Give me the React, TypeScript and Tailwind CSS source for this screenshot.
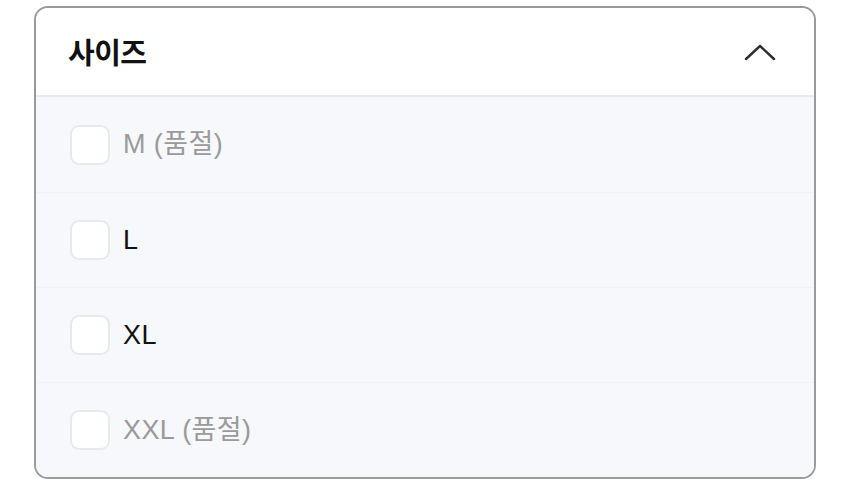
import React from "react";

const items = [
  { label: "M (품절)", disabled: true },
  { label: "L", disabled: false },
  { label: "XL", disabled: false },
  { label: "XXL (품절)", disabled: true },
];

export default function App() {
  return (
    <div className="w-[850px] h-[491px] bg-white pt-[6px] pl-[34px]" style={{ fontFamily: '"Liberation Sans", "Noto Sans CJK KR", sans-serif' }}>
      <div className="w-[782px] rounded-[14px] border-2 border-[#9a9a9a] overflow-hidden">
        <div className="h-[89px] flex items-center justify-between pl-[32px] pr-[37px] bg-white border-b-2 border-[#e9ebef]">
          <span className="text-[29px] font-bold text-[#111] tracking-[-0.5px]" style={{ fontFamily: '"Noto Sans CJK KR", sans-serif' }}>사이즈</span>
          <svg width="34" height="20" viewBox="0 0 34 20" fill="none">
            <path d="M3 17 L17 4 L31 17" stroke="#2f2f2f" strokeWidth="2.4" strokeLinecap="round" strokeLinejoin="round" />
          </svg>
        </div>
        <div className="bg-[#f7f8fc]">
          {items.map((it, i) => (
            <div
              key={it.label}
              className={
                "h-[95px] flex items-center gap-[13px] pl-[34px] " +
                (i > 0 ? "border-t border-[#f0f2f6]" : "")
              }
            >
              <div className="w-[40px] h-[40px] rounded-[9px] bg-white border-2 border-[#e8e9ec]" />
              <span className={"text-[27px] tracking-[0.4px] " + (it.disabled ? "text-[#9a9a9a]" : "text-[#111]")}>
                {it.label}
              </span>
            </div>
          ))}
        </div>
      </div>
    </div>
  );
}
